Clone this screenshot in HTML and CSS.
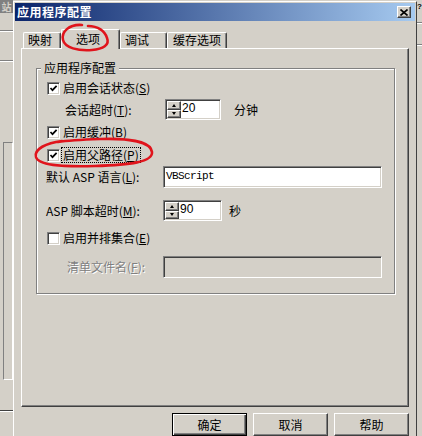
FILE: index.html
```html
<!DOCTYPE html>
<html lang="zh-CN">

<head>
    <meta charset="UTF-8">
    <title>应用程序配置</title>
    <link rel="stylesheet" href="styles.css">
</head>

<body>
    <div class="screen">
        <!-- parent window peeking out on the left -->
        <div class="backdrop-left">
            <div class="bg-title">站</div>
            <div class="bg-rule bg-rule-first"></div>
            <div class="bg-rule"></div>
            <div class="bg-list"></div>
            <div class="bg-rule bg-rule-bottom"></div>
        </div>

        <div class="dialog">
            <div class="titlebar">
                <span class="title">应用程序配置</span>
                <div class="close">
                    <svg width="8" height="7" viewBox="0 0 8 7">
                        <path d="M0.5 0.5 L7.5 6.5 M7.5 0.5 L0.5 6.5" stroke="#000" stroke-width="1.6" />
                    </svg>
                </div>
            </div>

            <div class="tabs">
                <div class="tab tab-map">映射</div>
                <div class="tab tab-opt active">选项</div>
                <div class="tab tab-debug">调试</div>
                <div class="tab tab-cache">缓存选项</div>
            </div>

            <div class="panel">
                <div class="group">
                    <div class="group-title">应用程序配置</div>

                    <div class="row check-row r1">
                        <span class="check on"><svg width="9" height="9" viewBox="0 0 9 9"><path d="M1.5 4 L3.5 6.2 L7.6 1.8" fill="none" stroke="#000" stroke-width="1.7" /></svg></span>
                        <span class="check-label">启用会话状态(<u>S</u>)</span>
                    </div>

                    <div class="row field-row r2">
                        <span class="field-label">会话超时(<u>T</u>):</span>
                        <div class="spin spin-short">
                            <div class="spin-btns">
                                <span class="spin-btn"><i class="arrow-up"></i></span>
                                <span class="spin-btn"><i class="arrow-down"></i></span>
                            </div>
                            <span class="spin-value">20</span>
                        </div>
                        <span class="unit">分钟</span>
                    </div>

                    <div class="row check-row r3">
                        <span class="check on"><svg width="9" height="9" viewBox="0 0 9 9"><path d="M1.5 4 L3.5 6.2 L7.6 1.8" fill="none" stroke="#000" stroke-width="1.7" /></svg></span>
                        <span class="check-label">启用缓冲(<u>B</u>)</span>
                    </div>

                    <div class="row check-row r4">
                        <span class="check on"><svg width="9" height="9" viewBox="0 0 9 9"><path d="M1.5 4 L3.5 6.2 L7.6 1.8" fill="none" stroke="#000" stroke-width="1.7" /></svg></span>
                        <span class="check-label focus">启用父路径(<u>P</u>)</span>
                    </div>

                    <div class="row field-row r5">
                        <span class="field-label">默认 ASP 语言(<u>L</u>):</span>
                        <div class="text">VBScript</div>
                    </div>

                    <div class="row field-row r6">
                        <span class="field-label">ASP 脚本超时(<u>M</u>):</span>
                        <div class="spin spin-long">
                            <div class="spin-btns">
                                <span class="spin-btn"><i class="arrow-up"></i></span>
                                <span class="spin-btn"><i class="arrow-down"></i></span>
                            </div>
                            <span class="spin-value">90</span>
                        </div>
                        <span class="unit unit-sec">秒</span>
                    </div>

                    <div class="row check-row r7">
                        <span class="check"></span>
                        <span class="check-label">启用并排集合(<u>E</u>)</span>
                    </div>

                    <div class="row field-row r8">
                        <span class="field-label disabled">清单文件名(<u>F</u>):</span>
                        <div class="text off"></div>
                    </div>
                </div>
            </div>

            <div class="buttons">
                <button class="btn default">确定</button>
                <button class="btn">取消</button>
                <button class="btn">帮助</button>
            </div>
        </div>

        <div class="backdrop-right">
            <div class="bg-help">?</div>
            <div class="bg-rule bg-rule-r1"></div>
            <div class="bg-rule bg-rule-r2"></div>
        </div>

        <!-- red hand-drawn marks on top of the screenshot -->
        <svg class="marks" width="422" height="436" viewBox="0 0 422 436">
            <path d="M82 25 C69 24 61 32 63 40 C65 48 78 51 92 50 C103 49 110 45 107 38 C105 31 98 26 88 26" fill="none" stroke="#e0141c" stroke-width="2.6" stroke-linecap="round" />
            <path d="M62 141 C46 143 34 149 36 157 C38 165 60 167 95 166 C130 165 153 162 152 152 C151 142 130 138 100 139 C85 139.5 70 140 58 142" fill="none" stroke="#e0141c" stroke-width="2.6" stroke-linecap="round" />
        </svg>
    </div>
</body>

</html>
```

FILE: styles.css
```css
* {
    box-sizing: border-box;
}

body {
    margin: 0;
    width: 422px;
    height: 436px;
    overflow: hidden;
    background-color: #d4d0c8;
    font-family: "Noto Sans CJK SC", "Liberation Sans", sans-serif;
    font-size: 12px;
    color: #000;
}

.screen {
    position: relative;
    display: flex;
    height: 436px;
}

/* background windows */
.backdrop-left {
    width: 13px;
    flex: none;
    overflow: hidden;
}

.bg-title {
    height: 13px;
    background-color: #808080;
    color: #d4d0c8;
    font-weight: bold;
    font-size: 10px;
    line-height: 13px;
    text-align: center;
}

.bg-rule {
    height: 2px;
    border-top: 1px solid #808080;
    border-bottom: 1px solid #fff;
}

.bg-rule-first {
    margin-top: 17px;
}

.backdrop-left .bg-rule:nth-child(3) {
    margin-top: 28px;
}

.bg-list {
    height: 238px;
    margin: 80px 0 0 3px;
    border: 1px solid;
    border-color: #808080 #fff #fff #808080;
}

.bg-rule-bottom {
    margin-top: 30px;
    border-top-color: #404040;
}

.backdrop-right {
    width: 5px;
    flex: none;
    overflow: hidden;
}

.bg-help {
    height: 14px;
    font-family: "Liberation Sans", sans-serif;
    font-weight: bold;
    font-size: 8px;
    line-height: 14px;
    color: #000;
}

.bg-rule-r1 {
    margin-top: 8px;
}

.bg-rule-r2 {
    margin-top: 20px;
}

/* dialog frame */
.dialog {
    width: 404px;
    height: 436px;
    flex: none;
    margin-top: 1px;
    padding: 1px;
    border-left: 1px solid #fff;
    border-top: 1px solid #fff;
    border-right: 1px solid #404040;
}

.titlebar {
    height: 18px;
    display: flex;
    align-items: center;
    justify-content: space-between;
    padding: 0 4px 0 2px;
    background: linear-gradient(to right, #0a246a, #a6caf0);
}

.title {
    color: #fff;
    font-weight: bold;
    line-height: 18px;
    letter-spacing: 0.5px;
}

.close {
    width: 14px;
    height: 12px;
    display: flex;
    align-items: center;
    justify-content: center;
    background-color: #d4d0c8;
    border: 1px solid;
    border-color: #fff #404040 #404040 #fff;
    box-shadow: inset -1px -1px #808080;
}

/* tabs */
.tabs {
    position: relative;
    z-index: 1;
    display: flex;
    align-items: flex-end;
    height: 19px;
    margin-top: 8px;
    padding-left: 8px;
}

.tab {
    height: 16px;
    line-height: 14px;
    background-color: #d4d0c8;
    border: 1px solid #fff;
    border-bottom: none;
    border-right-color: #404040;
    border-radius: 2px 2px 0 0;
    box-shadow: inset -1px 0 #808080;
    white-space: nowrap;
}

.tab-map {
    width: 38px;
    padding-left: 4px;
}

.tab-opt {
    width: 59px;
    padding-left: 14px;
}

.tab-debug {
    width: 47px;
    padding-left: 4px;
}

.tab-cache {
    width: 60px;
    padding-left: 5px;
    border-left-color: #fff;
}

.tab.active {
    height: 20px;
    padding-top: 2px;
    margin-bottom: -1px;
}

.panel {
    width: 388px;
    height: 359px;
    margin-left: 6px;
    padding-left: 14px;
    border: 1px solid;
    border-color: #fff #404040 #404040 #fff;
    box-shadow: inset -1px -1px #808080;
}

/* group box */
.group {
    width: 359px;
    height: 226px;
    margin-top: 19px;
    border: 1px solid #808080;
    box-shadow: inset 1px 1px #fff, 1px 1px #fff;
}

.group-title {
    width: max-content;
    margin: -8px 0 0 4px;
    padding: 0 3px;
    line-height: 14px;
    background-color: #d4d0c8;
}

.row {
    display: flex;
    align-items: center;
    white-space: nowrap;
}

.check-row {
    height: 18px;
    padding-left: 10px;
}

.field-row {
    height: 21px;
}

.r1 { margin-top: 4px; }
.r2 { margin-top: 2px; padding-left: 28px; }
.r3 { margin-top: 3px; }
.r4 { margin-top: 5px; }
.r5 { margin-top: 2px; height: 22px; padding-left: 9px; }
.r6 { margin-top: 12px; padding-left: 9px; }
.r7 { margin-top: 8px; }
.r8 { margin-top: 9px; height: 22px; padding-left: 30px; }

.check {
    width: 13px;
    height: 13px;
    padding: 1px;
    margin-right: 1px;
    background-color: #fff;
    border: 1px solid;
    border-color: #808080 #fff #fff #808080;
    box-shadow: inset 1px 1px #404040, inset -1px -1px #d4d0c8;
}

.check svg {
    display: block;
}

.check-label {
    line-height: 14px;
    padding: 0 1px;
    border: 1px dotted transparent;
}

.check-label.focus {
    border-color: #000;
}

.field-label {
    line-height: 14px;
}

.r2 .field-label {
    width: 100px;
}

.r5 .field-label,
.r6 .field-label {
    width: 117px;
}

.r8 .field-label {
    width: 96px;
}

.field-label.disabled {
    color: #808080;
    text-shadow: 1px 1px 0 #fff;
}

/* spinner and text boxes */
.spin {
    display: flex;
    height: 21px;
    padding: 1px;
    background-color: #fff;
    border: 1px solid;
    border-color: #808080 #fff #fff #808080;
    box-shadow: inset 1px 1px #404040, inset -1px -1px #d4d0c8;
}

.spin-short {
    width: 56px;
}

.spin-long {
    width: 59px;
}

.spin-btns {
    display: flex;
    flex-direction: column;
    width: 14px;
}

.spin-btn {
    flex: 1;
    display: flex;
    align-items: center;
    justify-content: center;
    background-color: #d4d0c8;
    border: 1px solid;
    border-color: #fff #404040 #404040 #fff;
    box-shadow: inset -1px -1px #808080;
}

.arrow-up {
    width: 0;
    height: 0;
    border-left: 2.5px solid transparent;
    border-right: 2.5px solid transparent;
    border-bottom: 3px solid #000;
}

.arrow-down {
    width: 0;
    height: 0;
    border-left: 2.5px solid transparent;
    border-right: 2.5px solid transparent;
    border-top: 3px solid #000;
}

.spin-value {
    padding-left: 1px;
    font-family: "Liberation Sans", sans-serif;
    font-size: 12px;
    line-height: 15px;
}

.unit {
    margin-left: 13px;
}

.unit-sec {
    margin-left: 7px;
}

.text {
    width: 219px;
    height: 22px;
    padding-left: 2px;
    background-color: #fff;
    border: 1px solid;
    border-color: #808080 #fff #fff #808080;
    box-shadow: inset 1px 1px #404040, inset -1px -1px #d4d0c8;
    font-family: "Liberation Mono", monospace;
    font-size: 11px;
    letter-spacing: -0.6px;
    line-height: 19px;
}

.text.off {
    background-color: #d4d0c8;
}

/* bottom buttons */
.buttons {
    display: flex;
    justify-content: flex-end;
    gap: 6px;
    width: 394px;
    margin-top: 6px;
}

.btn {
    width: 75px;
    height: 23px;
    padding: 0;
    font: inherit;
    color: #000;
    background-color: #d4d0c8;
    border: 1px solid;
    border-color: #fff #404040 #404040 #fff;
    box-shadow: inset -1px -1px #808080;
}

.btn.default {
    border-color: #000;
    box-shadow: inset 1px 1px #fff, inset -1px -1px #404040, inset -2px -2px #808080;
}

.marks {
    position: absolute;
    z-index: 2;
    left: 0;
    top: 0;
    pointer-events: none;
}
```
